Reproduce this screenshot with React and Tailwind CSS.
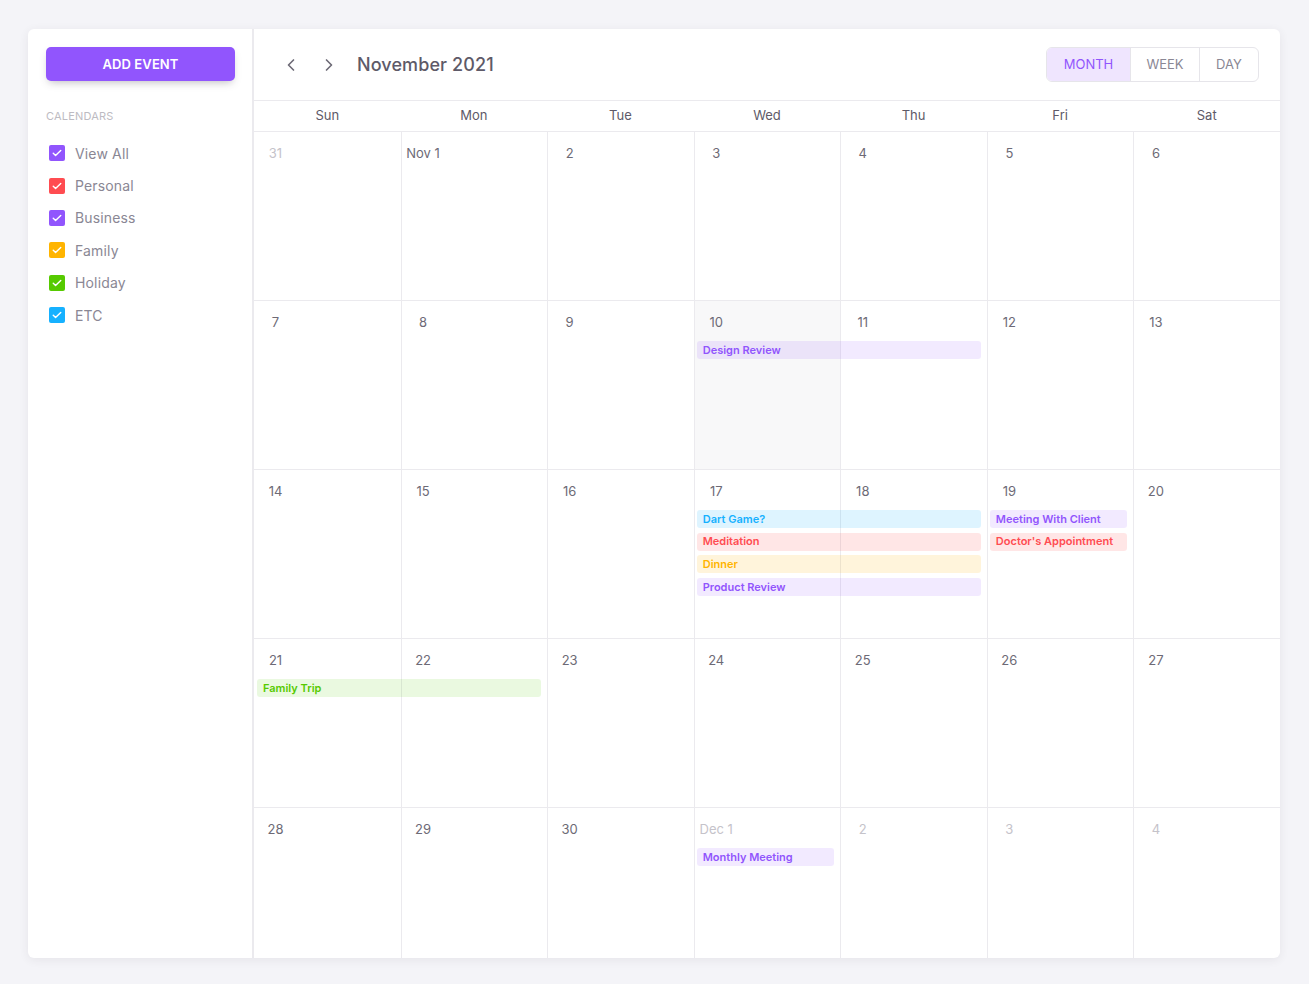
import React from "react";
import { ChevronLeft, ChevronRight } from "lucide-react";

const calendars = [
  { label: "View All", color: "bg-[#9155fd]" },
  { label: "Personal", color: "bg-[#ff4c51]" },
  { label: "Business", color: "bg-[#9155fd]" },
  { label: "Family", color: "bg-[#ffb400]" },
  { label: "Holiday", color: "bg-[#56ca00]" },
  { label: "ETC", color: "bg-[#16b1ff]" },
];

const evStyles = {
  purple: "bg-[#9155fd]/[0.12] text-[#9155fd]",
  red: "bg-[#ff4c51]/[0.14] text-[#ff4c51]",
  yellow: "bg-[#ffb400]/[0.14] text-[#ffb400]",
  green: "bg-[#56ca00]/[0.12] text-[#56ca00]",
  blue: "bg-[#16b1ff]/[0.14] text-[#16b1ff]",
};

const colStart = {
  1: "col-start-1",
  2: "col-start-2",
  3: "col-start-3",
  4: "col-start-4",
  5: "col-start-5",
  6: "col-start-6",
  7: "col-start-7",
};
const colSpan = { 1: "col-span-1", 2: "col-span-2", 3: "col-span-3" };
const rowStart = { 0: "row-start-2", 1: "row-start-3", 2: "row-start-4", 3: "row-start-5" };

const weeks = [
  {
    days: [
      { n: "31", muted: true },
      { n: "Nov 1" },
      { n: "2" },
      { n: "3" },
      { n: "4" },
      { n: "5" },
      { n: "6" },
    ],
    events: [],
  },
  {
    days: [
      { n: "7" },
      { n: "8" },
      { n: "9" },
      { n: "10", today: true },
      { n: "11" },
      { n: "12" },
      { n: "13" },
    ],
    events: [{ title: "Design Review", col: 4, span: 2, row: 0, c: "purple" }],
  },
  {
    days: [
      { n: "14" },
      { n: "15" },
      { n: "16" },
      { n: "17" },
      { n: "18" },
      { n: "19" },
      { n: "20" },
    ],
    events: [
      { title: "Dart Game?", col: 4, span: 2, row: 0, c: "blue" },
      { title: "Meditation", col: 4, span: 2, row: 1, c: "red" },
      { title: "Dinner", col: 4, span: 2, row: 2, c: "yellow" },
      { title: "Product Review", col: 4, span: 2, row: 3, c: "purple" },
      { title: "Meeting With Client", col: 6, span: 1, row: 0, c: "purple" },
      { title: "Doctor's Appointment", col: 6, span: 1, row: 1, c: "red" },
    ],
  },
  {
    days: [
      { n: "21" },
      { n: "22" },
      { n: "23" },
      { n: "24" },
      { n: "25" },
      { n: "26" },
      { n: "27" },
    ],
    events: [{ title: "Family Trip", col: 1, span: 2, row: 0, c: "green" }],
  },
  {
    days: [
      { n: "28" },
      { n: "29" },
      { n: "30" },
      { n: "Dec 1", muted: true },
      { n: "2", muted: true },
      { n: "3", muted: true },
      { n: "4", muted: true },
    ],
    events: [{ title: "Monthly Meeting", col: 4, span: 1, row: 0, c: "purple" }],
  },
];

function Check() {
  return (
    <svg viewBox="0 0 16 16" className="w-[12px] h-[12px]" fill="none">
      <path d="M3 8.3l3.1 3L13 4.6" stroke="white" strokeWidth="1.9" strokeLinecap="round" strokeLinejoin="round" />
    </svg>
  );
}

function Week({ week, last }) {
  return (
    <div
      className={`grid grid-cols-7 grid-rows-[40px_repeat(4,22.7px)_1fr] ${
        last ? "flex-1 min-h-0" : "h-[169px] border-b border-[#ebeaee]"
      }`}
    >
      {week.days.map((d, i) => (
        <div
          key={i}
          className={`${colStart[i + 1]} row-start-1 row-end-7 ${
            i > 0 ? "border-l border-[#ebeaee]" : ""
          } ${d.today ? "bg-[#f8f8f9]" : ""}`}
        >
          <div className="w-[43px] flex justify-center pt-[11px] leading-[20px] text-[13px] whitespace-nowrap">
            <span className={d.muted ? "text-[#c5c3ca]" : "text-[#6d6a76]"}>{d.n}</span>
          </div>
        </div>
      ))}
      {week.events.map((e, i) => (
        <div
          key={i}
          className={`${colStart[e.col]} ${colSpan[e.span]} ${rowStart[e.row]} ml-[3px] mr-[6px] h-[18px] rounded-[3px] px-[6px] flex items-center text-[11px] font-semibold whitespace-nowrap overflow-hidden ${evStyles[e.c]}`}
        >
          {e.title}
        </div>
      ))}
    </div>
  );
}

export default function App() {
  return (
    <div
      className="h-[984px] bg-[#f4f4f8] pl-[28px] pr-[29px] pt-[29px] pb-[26px] flex"
      style={{ fontFamily: "Inter, 'Noto Sans', sans-serif" }}
    >
      <div className="flex-1 flex bg-white rounded-[6px] shadow-[0_2px_10px_rgba(58,53,65,0.08)] overflow-hidden">
        {/* Sidebar */}
        <div className="w-[226px] shrink-0 border-r-2 border-[#ebeaee] px-[18px] pt-[18px]">
          <button className="w-[189px] h-[34px] rounded-[5px] bg-[#9155fd] text-white text-[13px] font-semibold tracking-[0.1px] pt-[1px] shadow-[0_4px_9px_-3px_rgba(58,53,65,0.35)]">
            ADD EVENT
          </button>
          <div className="mt-[28px] text-[11px] text-[#bdbbc2] tracking-[0.2px] leading-[14px]">CALENDARS</div>
          <div className="mt-[14px] flex flex-col">
            {calendars.map((c) => (
              <div key={c.label} className="h-[32.4px] flex items-center">
                <div className={`ml-[3px] w-[16px] h-[16px] rounded-[2px] flex items-center justify-center ${c.color}`}>
                  <Check />
                </div>
                <span className="ml-[10px] text-[14px] text-[#8a8794] tracking-[0.15px]">{c.label}</span>
              </div>
            ))}
          </div>
        </div>

        {/* Calendar */}
        <div className="flex-1 flex flex-col min-w-0">
          <div className="h-[72px] shrink-0 flex items-center pl-[27px] pr-[21px] border-b border-[#ebeaee]">
            <button className="w-[20px] h-[20px] flex items-center justify-center text-[#6d6a76]">
              <ChevronLeft size={20} strokeWidth={2} />
            </button>
            <button className="ml-[18px] w-[20px] h-[20px] flex items-center justify-center text-[#6d6a76]">
              <ChevronRight size={20} strokeWidth={2} />
            </button>
            <div className="ml-[18px] text-[18px] font-medium text-[#5e5a68] tracking-[0.1px]">November 2021</div>
            <div className="ml-auto flex h-[35px] border border-[#e6e5ea] rounded-[6px] overflow-hidden text-[13px]">
              <div className="w-[83px] flex items-center justify-center bg-[#efe5fe] text-[#9155fd]">MONTH</div>
              <div className="w-[69px] flex items-center justify-center border-l border-[#e6e5ea] text-[#8a8794]">WEEK</div>
              <div className="w-[59px] flex items-center justify-center border-l border-[#e6e5ea] text-[#8a8794]">DAY</div>
            </div>
          </div>
          <div className="h-[31px] shrink-0 grid grid-cols-7 border-b border-[#ebeaee]">
            {["Sun", "Mon", "Tue", "Wed", "Thu", "Fri", "Sat"].map((d) => (
              <div key={d} className="flex items-center justify-center text-[13px] text-[#5e5a68]">
                {d}
              </div>
            ))}
          </div>
          <div className="flex-1 flex flex-col min-h-0">
            {weeks.map((w, i) => (
              <Week key={i} week={w} last={i === weeks.length - 1} />
            ))}
          </div>
        </div>
      </div>
    </div>
  );
}
